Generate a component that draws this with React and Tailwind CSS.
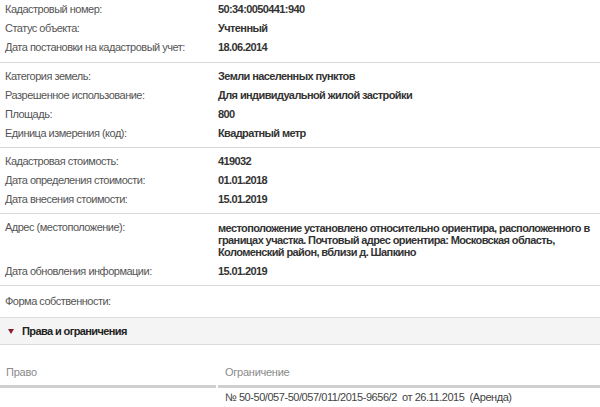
const groups = [
  [
    ["Кадастровый номер:", "50:34:0050441:940"],
    ["Статус объекта:", "Учтенный"],
    ["Дата постановки на кадастровый учет:", "18.06.2014"],
  ],
  [
    ["Категория земель:", "Земли населенных пунктов"],
    ["Разрешенное использование:", "Для индивидуальной жилой застройки"],
    ["Площадь:", "800"],
    ["Единица измерения (код):", "Квадратный метр"],
  ],
  [
    ["Кадастровая стоимость:", "419032"],
    ["Дата определения стоимости:", "01.01.2018"],
    ["Дата внесения стоимости:", "15.01.2019"],
  ],
  [
    [
      "Адрес (местоположение):",
      "местоположение установлено относительно ориентира, расположенного в границах участка. Почтовый адрес ориентира: Московская область, Коломенский район, вблизи д. Шапкино",
    ],
    ["Дата обновления информации:", "15.01.2019"],
  ],
];

function Row({ label, value }) {
  const long = value.length > 60;
  return (
    <div className="flex py-[4px] leading-[11px]">
      <div className="w-[218px] shrink-0 pl-[5px] tracking-[-0.5px] text-[#555]">{label}</div>
      <div
        className={`w-[382px] font-bold tracking-[-0.6px] text-[#333] ${long ? "leading-[12px]" : "leading-[11px]"}`}
      >
        {value}
      </div>
    </div>
  );
}

export default function App() {
  return (
    <div
      className="w-[600px] h-[407px] overflow-hidden bg-white text-[11px]"
      style={{ fontFamily: '"Liberation Sans", Arial, sans-serif' }}
    >
      {groups.map((rows, i) => (
        <div
          key={i}
          className={`border-b border-[#d8d8d8] ${i === 0 ? "pt-0 pb-[5px]" : "py-[4px]"}`}
        >
          {rows.map(([label, value]) => (
            <Row key={label} label={label} value={value} />
          ))}
        </div>
      ))}

      <div className="pt-[10px] pb-[10px] pl-[5px] leading-[11px] tracking-[-0.5px] text-[#555]">
        Форма собственности:
      </div>

      <div className="flex h-[28px] items-center gap-[8px] border-y border-[#dcdcdc] bg-[#f4f4f4] pl-[8px]">
        <svg width="6" height="5" viewBox="0 0 6 5">
          <path d="M0 0 L6 0 L3 5 Z" fill="#8a1c2c" />
        </svg>
        <span className="font-bold tracking-[-0.6px] text-[#222]">Права и ограничения</span>
      </div>

      <div className="mt-[22px] flex leading-[11px]">
        <div className="w-[216px] border-b-[3px] border-[#cfcfcf] pb-[7px] pl-[6px] tracking-[-0.2px] text-[#8a8a8a]">
          Право
        </div>
        <div className="ml-[2px] flex-1 border-b-[3px] border-[#cfcfcf] pb-[7px] pl-[7px] tracking-[-0.25px] text-[#8a8a8a]">
          Ограничение
        </div>
      </div>
      <div className="flex pt-[4px] leading-[11px]">
        <div className="w-[218px]" />
        <div className="pl-[7px] tracking-[-0.45px] text-[#444] whitespace-pre">
          {"№ 50-50/057-50/057/011/2015-9656/2  от 26.11.2015  (Аренда)"}
        </div>
      </div>
    </div>
  );
}
